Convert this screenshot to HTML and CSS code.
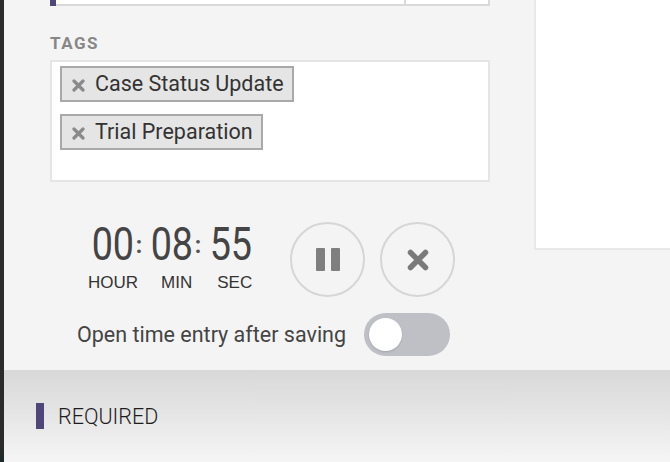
FILE: index.html
```html
<!DOCTYPE html>
<html>
<head>
<meta charset="utf-8">
<link rel="stylesheet" href="styles.css">
</head>
<body>
<div class="strip"></div>
<div class="main">
  <div class="content">
    <div class="form-col">
      <div class="field-top">
        <div class="accent"></div>
        <div class="input-box">
          <div class="cell-main"></div>
          <div class="cell-side"></div>
        </div>
      </div>
      <div class="label">TAGS</div>
      <div class="tags-box">
        <div class="tag">
          <svg class="tag-x" width="13" height="13" viewBox="0 0 13 13"><path d="M2 2 L11 11 M11 2 L2 11" stroke="#8a8a8a" stroke-width="3.2" stroke-linecap="round"/></svg>
          <span>Case Status Update</span>
        </div>
        <div class="tag">
          <svg class="tag-x" width="13" height="13" viewBox="0 0 13 13"><path d="M2 2 L11 11 M11 2 L2 11" stroke="#8a8a8a" stroke-width="3.2" stroke-linecap="round"/></svg>
          <span>Trial Preparation</span>
        </div>
      </div>
      <div class="timer-row">
        <div class="timer">
          <div class="digits">
            <span class="num"><span class="num-in">00</span></span>
            <span class="colon">:</span>
            <span class="num"><span class="num-in">08</span></span>
            <span class="colon">:</span>
            <span class="num"><span class="num-in">55</span></span>
          </div>
          <div class="units">
            <span class="unit u-hour">HOUR</span>
            <span class="unit u-min">MIN</span>
            <span class="unit u-sec">SEC</span>
          </div>
        </div>
        <div class="circle-btn">
          <svg width="24" height="24" viewBox="0 0 24 24"><rect x="0" y="0" width="9" height="23" rx="1" fill="#7f7f7f"/><rect x="15" y="0" width="9" height="23" rx="1" fill="#7f7f7f"/></svg>
        </div>
        <div class="circle-btn">
          <svg width="22" height="22" viewBox="0 0 22 22"><path d="M3.5 3.5 L18.5 18.5 M18.5 3.5 L3.5 18.5" stroke="#7a7a7a" stroke-width="5.5" stroke-linecap="round"/></svg>
        </div>
      </div>
      <div class="toggle-row">
        <span class="toggle-label">Open time entry after saving</span>
        <div class="toggle"><div class="knob"></div></div>
      </div>
    </div>
    <div class="side-panel"></div>
  </div>
  <div class="footer">
    <div class="req-bar"></div>
    <span class="req-text">REQUIRED</span>
  </div>
</div>
</body>
</html>
```

FILE: styles.css
```css
html, body {
  margin: 0;
  padding: 0;
}
body {
  width: 670px;
  height: 462px;
  overflow: hidden;
  display: flex;
  background: #f4f4f4;
  font-family: Roboto, "Liberation Sans", sans-serif;
}
.strip {
  width: 4px;
  flex: none;
  background: linear-gradient(to bottom, #2b2b2b 0, #2b2b2b 445px, #1c2a2a 462px);
}
.main {
  flex: 1;
  display: flex;
  flex-direction: column;
}
.content {
  height: 370px;
  display: flex;
  align-items: flex-start;
  background: #f4f4f4;
}
.form-col {
  width: 440px;
  margin-left: 46px;
  display: flex;
  flex-direction: column;
}
.field-top {
  display: flex;
  height: 6px;
}
.accent {
  width: 6px;
  background: #51467a;
}
.input-box {
  width: 432px;
  display: flex;
  border-right: 2px solid #d9d9d9;
  border-bottom: 2px solid #d9d9d9;
  background: #fff;
}
.cell-main {
  flex: 1;
}
.cell-side {
  width: 82px;
  border-left: 2px solid #d9d9d9;
}
.label {
  margin-top: 27px;
  font-weight: 700;
  font-size: 17px;
  line-height: 20px;
  letter-spacing: 1.5px;
  color: #878787;
}
.tags-box {
  margin-top: 7px;
  height: 110px;
  border: 2px solid #e5e5e5;
  background: #fff;
  padding: 4px 8px;
  width: 420px;
  display: flex;
  flex-direction: column;
  align-items: flex-start;
  gap: 12px;
}
.tag {
  display: flex;
  align-items: center;
  gap: 10px;
  height: 32px;
  padding: 0 8px 0 10px;
  border: 2px solid #a9a9a9;
  background: #e5e5e5;
  font-size: 21.5px;
  line-height: 32px;
  color: #333;
}
.tag-x {
  margin-top: 3px;
}
.timer-row {
  margin-top: 40px;
  display: flex;
  align-items: flex-start;
  padding-left: 37px;
}
.timer {
  width: 167px;
  margin-right: 36px;
}
.digits {
  display: flex;
  height: 45px;
}
.num {
  width: 42px;
  font-size: 46px;
  line-height: 45px;
  color: #444;
  text-align: center;
}
.num-in {
  display: inline-block;
  transform: scaleX(0.82);
}
.colon {
  width: 17px;
  font-size: 23px;
  font-weight: 700;
  line-height: 45px;
  color: #555;
  text-align: center;
  padding-top: 1px;
  padding-left: 3px;
  box-sizing: border-box;
}
.units {
  margin-top: 6px;
  padding-left: 1px;
  display: flex;
  font-family: "Liberation Sans", Arial, sans-serif;
  font-size: 17px;
  line-height: 20px;
  color: #333;
}
.u-min {
  margin-left: 23px;
}
.u-sec {
  margin-left: 25px;
}
.circle-btn {
  width: 71px;
  height: 71px;
  border: 2px solid #d6d6d6;
  border-radius: 50%;
  display: flex;
  align-items: center;
  justify-content: center;
  margin-right: 15px;
}
.toggle-row {
  margin-top: 16px;
  display: flex;
  align-items: center;
  padding-left: 27px;
}
.toggle-label {
  font-size: 21.5px;
  color: #444;
  margin-right: 18px;
}
.toggle {
  width: 86px;
  height: 43px;
  border-radius: 22px;
  background: #bec0c6;
  display: flex;
  align-items: center;
  padding-left: 5px;
  box-sizing: border-box;
}
.knob {
  width: 33px;
  height: 33px;
  border-radius: 50%;
  background: #fff;
  box-shadow: 0 1px 2px rgba(0,0,0,0.15);
}
.side-panel {
  margin-left: 44px;
  flex: 1;
  height: 248px;
  background: #fff;
  border-left: 2px solid #e8e8e8;
  border-bottom: 2px solid #e8e8e8;
}
.footer {
  height: 92px;
  display: flex;
  align-items: center;
  padding-left: 32px;
  background: linear-gradient(to bottom, #d8d8d8 0%, #e6e6e6 50%, #f5f5f5 100%);
}
.req-bar {
  width: 8px;
  height: 26px;
  background: #51467a;
  margin-right: 14px;
}
.req-text {
  font-size: 21.5px;
  font-weight: 300;
  color: #1e1e1e;
}
```
